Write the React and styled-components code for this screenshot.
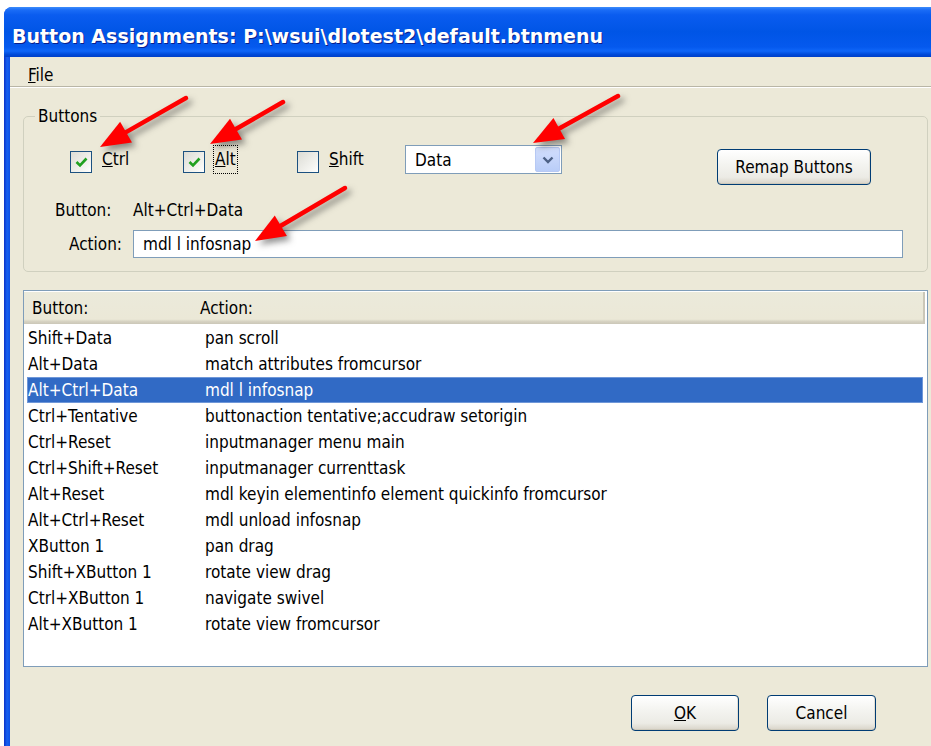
import React from 'react';
import styled, { createGlobalStyle } from 'styled-components';

const GlobalStyle = createGlobalStyle`
  html, body {
    margin: 0;
    padding: 0;
    background: #ffffff;
    overflow: hidden;
  }
  body {
    font-family: 'DejaVu Sans Condensed', 'DejaVu Sans', sans-serif;
    font-size: 17px;
    color: #000;
  }
`;

const assignments = [
  ['Shift+Data', 'pan scroll'],
  ['Alt+Data', 'match attributes fromcursor'],
  ['Alt+Ctrl+Data', 'mdl l infosnap'],
  ['Ctrl+Tentative', 'buttonaction tentative;accudraw setorigin'],
  ['Ctrl+Reset', 'inputmanager menu main'],
  ['Ctrl+Shift+Reset', 'inputmanager currenttask'],
  ['Alt+Reset', 'mdl keyin elementinfo element quickinfo fromcursor'],
  ['Alt+Ctrl+Reset', 'mdl unload infosnap'],
  ['XButton 1', 'pan drag'],
  ['Shift+XButton 1', 'rotate view drag'],
  ['Ctrl+XButton 1', 'navigate swivel'],
  ['Alt+XButton 1', 'rotate view fromcursor'],
];

const arrows = [
  { from: [186, 98], to: [100, 147] },
  { from: [283, 102], to: [210, 144] },
  { from: [618, 96], to: [533, 143] },
  { from: [345, 188], to: [255, 241] },
];

const Page = styled.div`
  position: relative;
  width: 931px;
  height: 746px;
  overflow: hidden;
  padding: 7px 0 0 4px;
  box-sizing: border-box;
`;

const Window = styled.div`
  width: 943px;
  height: 760px;
  display: flex;
  flex-direction: column;
  border-radius: 8px 8px 0 0;
  overflow: hidden;
  background: linear-gradient(to right, #0a32c8 0px, #1660f0 3px, #0d4fe6 6px);
`;

const TitleBar = styled.div`
  height: 50px;
  flex: none;
  display: flex;
  align-items: center;
  padding: 7px 0 0 8px;
  box-sizing: border-box;
  background: linear-gradient(
    to bottom,
    #3d8cfb 0px,
    #1a6cf6 3px,
    #0a5cef 8px,
    #0055e6 50%,
    #0559ee 80%,
    #0f66f8 88%,
    #004ad9 95%,
    #003fc8 100%
  );
`;

const Title = styled.span`
  font-family: 'DejaVu Sans', sans-serif;
  font-weight: bold;
  font-size: 19px;
  color: #ffffff;
  text-shadow: 1px 1px 0 #0a1e8c;
  white-space: nowrap;
`;

const Body = styled.div`
  flex: 1;
  margin: 0 6px;
  background: #ece9d8;
  display: flex;
  flex-direction: column;
`;

const MenuBar = styled.div`
  height: 30px;
  flex: none;
  display: flex;
  align-items: center;
  padding: 7px 0 0 18px;
  box-sizing: border-box;
  border-bottom: 1px solid #b9b6a6;
  box-shadow: 0 1px 0 #ffffff;
`;

const MenuItem = styled.span`
  font-size: 17px;
`;

const Content = styled.div`
  display: flex;
  flex-direction: column;
  padding: 0 13px;
`;

const GroupBox = styled.fieldset`
  margin: 19px 0 0 0;
  padding: 19px 24px 13px 0;
  min-width: 0;
  border: 1px solid #d0d0bf;
  border-radius: 5px;
`;

const GroupTitle = styled.legend`
  margin-left: 11px;
  padding: 0 3px;
  line-height: 20px;
  font-size: 17px;
`;

const CheckRow = styled.div`
  display: flex;
  align-items: flex-start;
  padding-left: 46px;
`;

const CheckItem = styled.label`
  width: ${(p) => p.width}px;
  display: flex;
  align-items: flex-start;
  gap: 8px;
  flex: none;
`;

const Box = styled.span`
  width: 20px;
  height: 20px;
  margin-top: 6px;
  border: 1px solid #1c5180;
  background: linear-gradient(135deg, #dcdcd5 0%, #f4f4f0 70%, #ffffff 100%);
  display: inline-flex;
  align-items: center;
  justify-content: center;
`;

const CheckLabel = styled.span`
  padding: 0 1px;
  line-height: 27px;
  border: 1px dotted ${(p) => (p.focused ? '#000' : 'transparent')};
`;

const ComboBox = styled.div`
  width: 157px;
  height: 29px;
  flex: none;
  box-sizing: border-box;
  border: 1px solid #7f9db9;
  background: #ffffff;
  display: flex;
  align-items: center;
  padding: 0 1px 0 9px;
  font-size: 17px;
`;

const ComboText = styled.span`
  flex: 1;
`;

const ComboButton = styled.span`
  width: 25px;
  height: 25px;
  box-sizing: border-box;
  border: 1px solid #b7c9f4;
  border-radius: 2px;
  background: linear-gradient(to bottom, #d2defc, #b9cdf8);
  display: flex;
  align-items: center;
  justify-content: center;
`;

const PushButton = styled.button`
  width: ${(p) => p.width}px;
  height: 36px;
  flex: none;
  margin: ${(p) => p.margin || '0'};
  padding: 0;
  border: 1px solid #003c74;
  border-radius: 4px;
  background: linear-gradient(to bottom, #ffffff 0%, #f3f3ef 45%, #ecebe5 80%, #d8d3c8 100%);
  box-shadow: inset 0 -1px 0 #cdc8ba, inset -1px 0 0 #e3dfd4;
  font-family: inherit;
  font-size: 17px;
  color: #000;
`;

const FieldGrid = styled.div`
  display: grid;
  grid-template-columns: 98px 1fr;
  grid-template-rows: 22px 28px;
  column-gap: 11px;
  row-gap: 9px;
  margin-top: 14px;
  align-items: center;
`;

const FieldLabel = styled.span`
  justify-self: ${(p) => p.align || 'start'};
  padding-left: ${(p) => p.indent || 0}px;
`;

const TextInput = styled.div`
  height: 28px;
  box-sizing: border-box;
  border: 1px solid #7f9db9;
  background: #ffffff;
  display: flex;
  align-items: center;
  padding-left: 9px;
`;

const ListView = styled.div`
  margin-top: 18px;
  height: 377px;
  box-sizing: border-box;
  border: 1px solid #7f9db9;
  background: #ffffff;
  display: flex;
  flex-direction: column;
`;

const ListHeader = styled.div`
  height: 32px;
  margin: 1px 2px 0 0;
  display: grid;
  grid-template-columns: 168px 1fr;
  align-items: center;
  padding-left: 8px;
  background: linear-gradient(to bottom, #ebeadb 0%, #ebe8d7 85%, #d6d2c2 92%, #cbc7b8 100%);
  box-shadow: inset -2px 0 0 #cbc7b8;
`;

const Row = styled.div`
  height: 26px;
  margin: 0 4px 0 3px;
  box-sizing: border-box;
  display: grid;
  grid-template-columns: 177px 1fr;
  align-items: center;
  padding-left: 1px;
  white-space: nowrap;
  background: ${(p) => (p.selected ? '#316ac5' : 'transparent')};
  color: ${(p) => (p.selected ? '#ffffff' : '#000')};
  outline: ${(p) => (p.selected ? '1px solid #6f97d8' : 'none')};
  outline-offset: -1px;
`;

const Rows = styled.div`
  padding-top: 1px;
`;

const ButtonBar = styled.div`
  display: flex;
  justify-content: flex-end;
  gap: 28px;
  margin-top: 28px;
  padding-right: 52px;
`;

const Overlay = styled.svg`
  position: absolute;
  top: 0;
  left: 0;
  pointer-events: none;
  filter: drop-shadow(4px 4px 3px rgba(40, 40, 40, 0.5));
`;

const Check = () => (
  <svg width="13" height="12" viewBox="0 0 13 12">
    <polyline points="1.5,6 5,9.5 11.5,2.5" fill="none" stroke="#21a121" strokeWidth="2.6" />
  </svg>
);

const Chevron = () => (
  <svg width="12" height="8" viewBox="0 0 12 8">
    <polyline points="1.5,1.5 6,6 10.5,1.5" fill="none" stroke="#4d6185" strokeWidth="2.4" />
  </svg>
);

const Arrow = ({ from, to }) => {
  const [x1, y1] = from;
  const [x2, y2] = to;
  const a = Math.atan2(y2 - y1, x2 - x1);
  const len = 30;
  const half = 12;
  const bx = x2 - len * Math.cos(a);
  const by = y2 - len * Math.sin(a);
  const px = -Math.sin(a) * half;
  const py = Math.cos(a) * half;
  return (
    <g>
      <line x1={x1} y1={y1} x2={bx} y2={by} stroke="#ff0000" strokeWidth="4.5" strokeLinecap="round" />
      <polygon
        points={`${x2},${y2} ${bx + px},${by + py} ${bx - px},${by - py}`}
        fill="#ff0000"
      />
    </g>
  );
};

const CheckOption = ({ width, checked, focused, mnemonic, rest }) => (
  <CheckItem width={width}>
    <Box>{checked && <Check />}</Box>
    <CheckLabel focused={focused}>
      <u>{mnemonic}</u>
      {rest}
    </CheckLabel>
  </CheckItem>
);

export default function App() {
  return (
    <>
      <GlobalStyle />
      <Page>
        <Window>
          <TitleBar>
            <Title>Button Assignments: P:\wsui\dlotest2\default.btnmenu</Title>
          </TitleBar>
          <Body>
            <MenuBar>
              <MenuItem>
                <u>F</u>ile
              </MenuItem>
            </MenuBar>
            <Content>
              <GroupBox>
                <GroupTitle>Buttons</GroupTitle>
                <CheckRow>
                  <CheckOption width={113} checked mnemonic="C" rest="trl" />
                  <CheckOption width={114} checked focused mnemonic="A" rest="lt" />
                  <CheckOption width={108} mnemonic="S" rest="hift" />
                  <ComboBox>
                    <ComboText>Data</ComboText>
                    <ComboButton>
                      <Chevron />
                    </ComboButton>
                  </ComboBox>
                  <PushButton width={154} margin="4px 32px 0 auto">
                    Remap Buttons
                  </PushButton>
                </CheckRow>
                <FieldGrid>
                  <FieldLabel indent={31}>Button:</FieldLabel>
                  <span>Alt+Ctrl+Data</span>
                  <FieldLabel align="end">Action:</FieldLabel>
                  <TextInput>mdl l infosnap</TextInput>
                </FieldGrid>
              </GroupBox>
              <ListView>
                <ListHeader>
                  <span>Button:</span>
                  <span>Action:</span>
                </ListHeader>
                <Rows>
                  {assignments.map(([button, action], i) => (
                    <Row key={button} selected={i === 2}>
                      <span>{button}</span>
                      <span>{action}</span>
                    </Row>
                  ))}
                </Rows>
              </ListView>
              <ButtonBar>
                <PushButton width={108}>
                  <u>O</u>K
                </PushButton>
                <PushButton width={109}>Cancel</PushButton>
              </ButtonBar>
            </Content>
          </Body>
        </Window>
        <Overlay width="931" height="746" viewBox="0 0 931 746">
          {arrows.map((arrow, i) => (
            <Arrow key={i} {...arrow} />
          ))}
        </Overlay>
      </Page>
    </>
  );
}
